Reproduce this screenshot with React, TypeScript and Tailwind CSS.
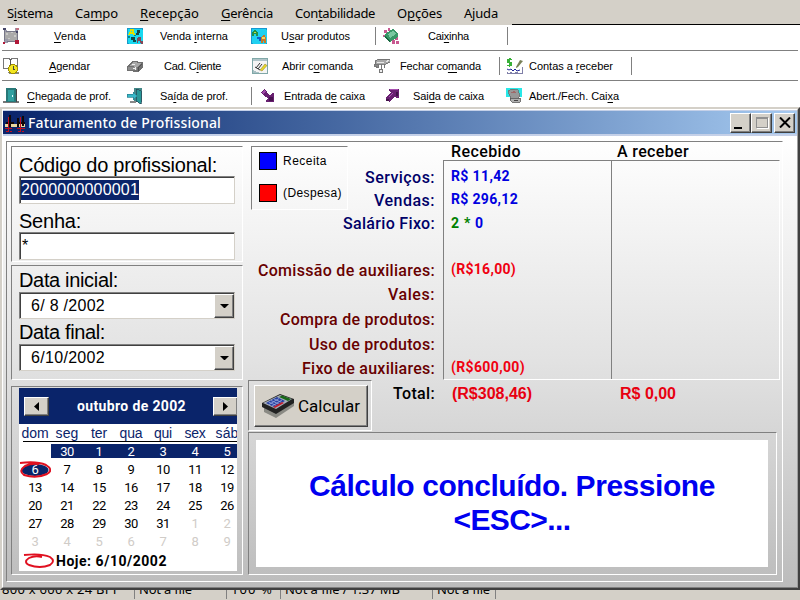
import React, { useLayoutEffect, useRef, useState } from "react";

const arial = "font-['Liberation_Sans',Arial,sans-serif]";
const roboto = "font-['Roboto','Liberation_Sans',sans-serif]";
const tahoma = "font-['Noto_Sans','Liberation_Sans',sans-serif]";
const etched = "border border-t-[#808080] border-l-[#808080] border-r-white border-b-white";

/* A label whose tracking is adjusted so that it fills a given width. */
function Fit({ w, t, className = "" }: { w: number; t: string; className?: string }) {
  const ref = useRef<HTMLSpanElement>(null);
  const [ls, setLs] = useState(0);
  useLayoutEffect(() => {
    const el = ref.current;
    if (!el) return;
    const n = (el.textContent || "").length;
    setLs((w - el.getBoundingClientRect().width) / Math.max(1, n));
  }, [w, t]);
  const i = t.indexOf("&");
  return (
    <span className={"block shrink-0 whitespace-pre " + className} style={{ width: w, letterSpacing: ls }}>
      <span ref={ref} className="inline-block">
        {i < 0 ? t : (
          <>
            {t.slice(0, i)}
            <span className="underline underline-offset-2 decoration-1">{t[i + 1]}</span>
            {t.slice(i + 2)}
          </>
        )}
      </span>
    </span>
  );
}

type IconName = "venda" | "interna" | "usar" | "caixinha" | "agendar" | "cliente" | "abrir" | "fechar" | "contas" | "chegada" | "saida" | "entradaCx" | "saidaCx" | "abert";

const icons: Record<IconName, React.ReactNode> = {
  venda: (
    <>
      <path d="M2 3h12v10H2z" fill="#aaa" />
      <path d="M3 5h2v2H3zM8 4h2v1H8zM11 7h2v2h-2zM5 10h2v1H5z" fill="#c8c8c8" />
      <path d="M1 2h3v2H1zM12 0h3v4h-3zM1 11h4v4H1z" fill="#99a" />
      <path d="M1 1h1v12H1zM14 3h1v9h-1zM3 3h10v1H3zM4 13h8v1H4z" fill="#778" />
      <path d="M0 0h3v2H0zM13 3h2v2h-2z" fill="#446" />
      <path d="M12 12h4v4h-4zM0 14h2v2H0z" fill="#b01838" />
      <path d="M13 0h3v2h-3z" fill="#c07080" />
    </>
  ),
  interna: (
    <>
      <rect width="16" height="16" rx="1.5" fill="#18d8f0" stroke="#1898c8" />
      <path d="M2 7l2-5h2l1 5M3 5h3" stroke="#e0e000" strokeWidth="1.6" fill="none" />
      <path d="M10 2h3v3h-3zM9 5h3v2H9zM4 9h4v3H4zM6 12h3v2H6z" fill="#104848" />
      <path d="M1 8h2v2H1zM7 7h2v1H7z" fill="#088" />
      <path d="M11 9h3v6h-1v-2h-2v2h-1v-4zM14 13h2v3h-2z" fill="#804858" />
    </>
  ),
  usar: (
    <>
      <rect width="16" height="16" rx="1.5" fill="#20d0f0" stroke="#1898d0" />
      <path d="M1 8V5l2-3h2l2 3v3H5V6H3v2z" fill="#209048" />
      <path d="M3 4h2v1H3z" fill="#c0e040" />
      <path d="M6 9h4v4H8v-2H6z" fill="#1060c8" />
      <path d="M10 15V9l2-2h2l1 3v5h-2v-2h-1v2z" fill="#c87828" />
      <path d="M11 9h3v2h-3z" fill="#f0d860" />
    </>
  ),
  caixinha: (
    <>
      <path d="M1 2h3v3H1zM5 0h2v3H5zM0 7h3v2H0zM12 9h3v3h-3zM9 12h3v4H9zM13 13h3v3h-3z" fill="#c85890" />
      <path d="M3 5l7-4 5 4v4l-8 5-6-5z" fill="#389868" />
      <path d="M5 6l5-3 3 3-6 4z" fill="#78c8a0" />
      <path d="M1 9l6 5v-2L2 8z" fill="#186840" />
    </>
  ),
  agendar: (
    <>
      <path d="M.5.5h5l2 1 2-1h5v10h-5l-2 1-2-1h-5z" fill="#fff" stroke="#777" />
      <path d="M7.500 1v10" stroke="#555" />
      <path d="M5 14h11v2H6z" fill="#888" />
      <circle cx="10" cy="11" r="4.500" fill="#f2e620" stroke="#a09000" />
      <path d="M10 8v3h2" stroke="#444" fill="none" />
    </>
  ),
  cliente: (
    <>
      <path d="M0 8l5-5 11 1v5l-5 5-11-1z" fill="#707070" />
      <path d="M2 8l4-4 8 1-3 4z" fill="#a8a8a8" />
      <path d="M1 9h9v3H1z" fill="#8c8c8c" />
      <path d="M5 6h3v1H5zM8 9h1v3H8zM6 10h2v1H6z" fill="#eee" />
      <path d="M11 9l4-4v1l-3 3v4h-1z" fill="#505050" />
    </>
  ),
  abrir: (
    <>
      <path d="M.5.5h15v15H.5z" fill="#f4f4f4" stroke="#80a8a8" />
      <path d="M1 1h14v2H1z" fill="#b0c4c8" />
      <path d="M1 12L8 15H1z" fill="#a8c0c4" />
      <g shapeRendering="auto">
        <path d="M4 10l4-5M6 11l4-5M3 9l5 3" stroke="#333" fill="none" />
        <path d="M8 12l5-6 2 1.500-5 5.500z" fill="#e8d828" stroke="#887820" strokeWidth=".5" />
      </g>
    </>
  ),
  fechar: (
    <>
      <path d="M1 3l4-2h11v3l-4 2H1z" fill="#a8a8a8" stroke="#666" strokeWidth=".8" />
      <path d="M3 4h7M12 4l3-2" stroke="#e8e8e8" />
      <path d="M0 6h4v3H2V8H0zM7 6v5M10 6v4" stroke="#777" fill="#888" />
      <circle cx="7" cy="13" r="2" fill="#eee" stroke="#777" />
    </>
  ),
  contas: (
    <>
      <path d="M2 0h2v1h1v1H3v2h2v4H3v1H2V8H0V7h2V5H0V1h2z" fill="#38b038" />
      <g shapeRendering="auto">
        <path d="M9 9l4-7 3 1-5 6-2 1z" fill="#788058" />
        <path d="M0 11l2 1 2-1 2 2 2-2 2 2 3-1" stroke="#222898" fill="none" />
      </g>
      <path d="M15 9v6H0v-1M3 14.500h2M8 14.500h3" stroke="#8080a8" fill="none" />
    </>
  ),
  chegada: (
    <>
      <path d="M3 0h10v14H3z" fill="#287878" />
      <path d="M5 2h6v11H5z" fill="#30a0a0" />
      <path d="M9 7h1v2H9z" fill="#dff" />
      <path d="M0 13h3v1h10v-1h3v2H0z" fill="#777" />
      <path d="M13 1h1v13h-1z" fill="#444" />
    </>
  ),
  saida: (
    <>
      <path d="M7 0h8v14H7z" fill="#488" />
      <path d="M9 1l5 2v13l-5-3z" fill="#289898" stroke="#245" strokeWidth=".7" />
      <path d="M0 6h6V4l4 4-4 4V9H0z" fill="#38b8c8" stroke="#288090" strokeWidth=".7" />
      <path d="M3 13h6v2H3z" fill="#888" />
    </>
  ),
  entradaCx: (
    <>
      <path d="M1 4l4-3 4 6 2 0 1-2h2v9H6l0-2 2-2-3-1z" fill="#682070" />
      <path d="M2 4l3-2 1 2-3 2z" fill="#a048a8" />
      <path d="M9 9h4v4H9z" fill="#481050" />
    </>
  ),
  saidaCx: (
    <>
      <path d="M5 1h10v9h-3l-1-2-6 6-4-4 6-5-2-2z" fill="#682070" />
      <path d="M6 1h8v1H6zM7 6l2-1-4 5-1-1z" fill="#a850b0" />
      <path d="M2 11h3v2H2zM12 4h2v4h-2z" fill="#401048" />
    </>
  ),
  abert: (
    <>
      <path d="M0 0h16v9H0z" fill="#28e8e8" />
      <path d="M2 3l4-2 6 1 2 6-3 3H5z" fill="#989898" stroke="#666" strokeWidth=".7" />
      <path d="M4 4l5-1 1 2H5z" fill="#a06868" />
      <path d="M4 10h10v4H6l-2-2z" fill="#b0b0b0" stroke="#555" strokeWidth=".8" />
      <path d="M8 12h4" stroke="#444" />
    </>
  ),
};

function Icon({ n }: { n: IconName }) {
  return <svg className="block size-4 shrink-0" viewBox="0 0 16 16" shapeRendering="crispEdges">{icons[n]}</svg>;
}

function Tool({ n, t, w, cls, gap }: { n: IconName; t: string; w: number; cls: string; gap: string }) {
  return (
    <div className={"flex shrink-0 items-center " + cls}>
      <Icon n={n} />
      <Fit t={t} w={w} className={gap} />
    </div>
  );
}
const Sep = ({ cls }: { cls: string }) => <div className={"h-[18px] w-px shrink-0 bg-[#808080] " + cls} />;

function Row({ k }: { k: { t: string; w: number; h: string } }) {
  return (
    <div className={"flex shrink-0 items-center justify-end " + k.h}>
      <Fit t={k.t} w={k.w} />
    </div>
  );
}

const costs = [
  { t: "Comissão de auxiliares:", w: 177, h: "h-[25px]" },
  { t: "Vales:", w: 47, h: "h-6" },
  { t: "Compra de produtos:", w: 155, h: "h-[25px]" },
  { t: "Uso de produtos:", w: 126, h: "h-[25px]" },
  { t: "Fixo de auxiliares:", w: 133, h: "h-6" },
];

const inset = "border border-t-[#808080] border-l-[#808080] border-r-[#d4d0c8] border-b-[#d4d0c8] bg-white";
const raised = "bg-[#d4d0c8] border border-t-white border-l-white border-r-[#404040] border-b-[#404040] shadow-[inset_-1px_-1px_0_#808080]";

function DateBox({ t, w }: { t: string; w: number }) {
  return (
    <div className={"flex h-[27px] w-[216px] shrink-0 shadow-[inset_1px_1px_0_#404040] " + inset}>
      <div className="flex flex-1 items-center pl-[11px] text-[16px]"><Fit t={t} w={w} /></div>
      <div className={"mt-px flex h-6 w-5 items-center justify-center " + raised}>
        <svg className="h-1 w-[9px]" viewBox="0 0 9 4"><path d="M0 0h9L4.500 4.500z" /></svg>
      </div>
    </div>
  );
}

const weeks = [
  [0, 30, 1, 2, 3, 4, 5],
  [6, 7, 8, 9, 10, 11, 12],
  [13, 14, 15, 16, 17, 18, 19],
  [20, 21, 22, 23, 24, 25, 26],
  [27, 28, 29, 30, 31, 1, 2],
  [3, 4, 5, 6, 7, 8, 9],
];
const dayNames: [string, number][] = [["dom", 27], ["seg", 23], ["ter", 16], ["qua", 23], ["qui", 18], ["sex", 21], ["sáb", 23]];

function Calendar() {
  return (
    <div className="flex h-[183px] w-[218px] flex-col overflow-hidden bg-white">
      <div className="flex h-9 shrink-0 items-center bg-[#0a246a] pl-[5px] text-white">
        <div className={"flex h-[19px] w-[25px] shrink-0 items-center justify-center " + raised}>
          <svg className="h-[9px] w-[5px]" viewBox="0 0 5 9"><path d="M5 0v9L0 4.500z" /></svg>
        </div>
        <Fit t="outubro de 2002" w={109} className={"ml-7 text-[14px] font-bold " + roboto} />
        <div className={"ml-[27px] flex h-[19px] w-[25px] shrink-0 items-center justify-center " + raised}>
          <svg className="h-[9px] w-[5px]" viewBox="0 0 5 9"><path d="M0 0v9l5-4.500z" /></svg>
        </div>
      </div>
      <div className="grid h-[17px] shrink-0 grid-cols-[repeat(7,32px)] items-end text-[14px] leading-4 text-[#0a246a]">
        {dayNames.map(([d, w]) => <div key={d} className="flex justify-center"><Fit t={d} w={w} /></div>)}
      </div>
      <div className="ml-1 h-px shrink-0 bg-black" />
      <div className={"mt-px flex shrink-0 flex-col text-[13px] tracking-[-0.5px] " + roboto}>
        {weeks.map((wk, r) => (
          <div key={r} className="grid h-[18px] grid-cols-[repeat(7,32px)]">
            {wk.map((d, c) => {
              const out = r === 5 || (r === 4 && c > 4);
              const sel = r === 0 && c > 0;
              const today = r === 1 && c === 0;
              return (
                <div key={c} className={"relative flex h-[18px] items-center justify-center " + (out ? "text-[#d0ccc8]" : sel || today ? "text-white" : "text-black")}>
                  {sel && <div className="absolute inset-x-0 top-[1px] h-[14px] bg-[#0a246a]" />}
                  {today && (
                    <svg className="absolute left-0 top-0 h-[18px] w-8" viewBox="0 0 32 18" fill="none">
                      <ellipse cx="16" cy="9" rx="13.500" ry="6" fill="#0a246a" />
                      <path d="M1 2Q18 0 27 4Q35 9 28 13Q17 18 5 14Q-1 10 6 5Q12 2 20 3" stroke="#e01020" strokeWidth="2" />
                    </svg>
                  )}
                  <span className="relative">{d || ""}</span>
                </div>
              );
            })}
          </div>
        ))}
      </div>
      <div className="flex h-[19px] shrink-0 items-center pl-1">
        <svg className="h-4 w-8" viewBox="0 0 32 16" fill="none">
          <path d="M1 2Q18 0 27 4Q33 8 27 12Q17 16 6 12Q0 9 6 5Q12 2 19 4" stroke="#e01020" strokeWidth="1.900" />
        </svg>
        <Fit t="Hoje: 6/10/2002" w={111} className={"ml-px text-[14px] font-bold leading-[18px] " + roboto} />
      </div>
    </div>
  );
}

function Calculator() {
  return (
    <svg className="h-6 w-8 shrink-0" viewBox="0 0 32 24">
      <path d="M2 14l18-10 12 5v3L14 24 2 18z" fill="#8a8a84" />
      <path d="M0 9L18 0l14 5v4L14 20 0 13z" fill="#222" />
      <path d="M1 9L18 1l12 4-16 10z" fill="#a8aeb8" />
      <path d="M17 3l3-1.500 9 3.500-3 2z" fill="#186818" />
      <path d="M4 9l11-6 8 4-11 6z" fill="#2840a0" />
      <path d="M6.500 8l9 4M9 6.500l9 4M12 5l9 4M7 10.500l10-6M10 12l10-6" stroke="#98a8e0" strokeWidth=".8" fill="none" />
      <path d="M11 13l9-5 2 1-9 5z" fill="#c02030" />
    </svg>
  );
}

export default function App() {
  return (
    <div className={"flex h-[600px] w-[800px] flex-col overflow-hidden bg-white text-black " + arial}>
      <nav className={"flex h-[25px] shrink-0 flex-col bg-[#d4d0c8] text-[13px] " + tahoma}>
        <div className="flex h-6 items-center gap-[22px] pl-[7px] pt-px leading-5">
          <Fit t="S&istema" w={46} />
          <Fit t="Ca&mpo" w={43} />
          <Fit t="&Recepção" w={59} />
          <Fit t="&Gerência" w={52} />
          <Fit t="Con&tabilidade" w={80} />
          <Fit t="O&pções" w={45} />
          <Fit t="Ajuda" w={34} />
        </div>
        <div className="ml-[512px] h-px bg-black" />
      </nav>

      <div className="flex h-[82px] shrink-0 flex-col text-[11px] leading-4">
        <div className="mx-0.5 flex h-[26px] items-center border-b border-[#808080] pb-[3px]">
          <Tool n="venda" t="&Venda" w={32} cls="ml-px" gap="ml-[35px]" />
          <Tool n="interna" t="Venda &interna" w={68} cls="ml-[41px]" gap="ml-[17px]" />
          <Tool n="usar" t="U&sar produtos" w={69} cls="ml-[23px]" gap="ml-[14px]" />
          <Sep cls="ml-[25px]" />
          <Tool n="caixinha" t="Cai&xinha" w={41} cls="ml-[7px]" gap="ml-[29px]" />
          <Sep cls="ml-[38px]" />
        </div>
        <div className="mx-0.5 flex h-[30px] items-center border-b border-[#808080]">
          <Tool n="agendar" t="&Agendar" w={41} cls="ml-px" gap="ml-[30px]" />
          <Tool n="cliente" t="Cad. C&liente" w={57} cls="ml-[37px]" gap="ml-[21px]" />
          <Tool n="abrir" t="Abrir c&omanda" w={71} cls="ml-[31px]" gap="ml-[14px]" />
          <Tool n="fechar" t="Fechar co&manda" w={81} cls="ml-[21px]" gap="ml-[10px]" />
          <Sep cls="ml-[18px]" />
          <Tool n="contas" t="Contas a &receber" w={84} cls="ml-[7px]" gap="ml-[6px]" />
          <Sep cls="ml-[18px]" />
        </div>
        <div className="mx-0.5 flex h-[26px] items-center pt-[3px]">
          <Tool n="chegada" t="&Chegada de prof." w={84} cls="ml-px" gap="ml-[8px]" />
          <Tool n="saida" t="Sa&ída de prof." w={68} cls="ml-[16px]" gap="ml-[17px]" />
          <Sep cls="ml-[23px]" />
          <Tool n="entradaCx" t="Entrada d&e caixa" w={81} cls="ml-[8px]" gap="ml-[8px]" />
          <Tool n="saidaCx" t="Sai&da de caixa" w={71} cls="ml-[19px]" gap="ml-[13px]" />
          <Tool n="abert" t="Abert./Fech. Cai&xa" w={90} cls="ml-[22px]" gap="ml-[7px]" />
        </div>
      </div>

      <main className="flex h-[483px] w-[800px] shrink-0 flex-col border-2 border-t-[#d4d0c8] border-l-[#d4d0c8] border-r-[#404040] border-b-[#404040]">
        <div className="flex min-h-0 flex-1 flex-col border border-white border-r-[#a0a0a0] border-b-[#808080]">
          <header className="flex h-[26px] shrink-0 items-center border-b-2 border-t border-[#c4d0e8] bg-linear-to-r from-[#0a246a] to-[#a6caf0] pl-[2px] pr-[2px] text-white">
            <svg className="h-5 w-5" viewBox="0 0 20 20" shapeRendering="crispEdges">
              <path d="M0 11h20v3H0z" fill="#e8d8a0" />
              <path d="M5 2v12M13 5v9M18 3v10M1 10h8M13 10h7" stroke="#100808" strokeWidth="2" />
              <path d="M3.500 4v15M15.500 4v15M0 15.500h7M12 15.500h8" stroke="#c01020" />
              <path d="M1 18h2M5 18h2M13 18h2M17 18h2" stroke="#c01020" />
            </svg>
            <Fit t="Faturamento de Profissional" w={193} className={"ml-[3px] text-[14px] font-medium " + tahoma} />
            <div className="ml-auto flex">
              <div className={"flex h-5 w-[21px] items-end pb-[3px] pl-[3px] " + raised}><div className="h-0.5 w-2 bg-black" /></div>
              <div className={"flex h-5 w-[21px] items-center justify-center " + raised}><div className="h-[11px] w-3 border border-t-2 border-[#909090] bg-[#d4d0c8] shadow-[1px_1px_0_white]" /></div>
              <div className={"ml-0.5 flex h-5 w-[21px] items-center justify-center " + raised}>
                <svg className="h-[11px] w-3" viewBox="0 0 12 11"><path d="M1 .5l10 10M11 .5l-10 10" stroke="#000" strokeWidth="2" /></svg>
              </div>
            </div>
          </header>

          <div className="flex min-h-0 flex-1 bg-linear-to-b from-white via-[#e2e2e2] to-[#bcbcbc] pl-[3px] pt-[5px]">
            <div className={"flex h-[441px] w-[777px] shrink-0 " + etched}>
              {/* left column */}
              <section className="flex w-[241px] shrink-0 flex-col pl-1 pt-1 leading-6">
                <div className={"flex h-[116px] w-[232px] shrink-0 flex-col pl-[7px] pt-[6px] " + etched}>
                  <Fit t="Código do profissional:" w={198} className="text-[20px]" />
                  <div className={"-mt-px flex h-7 w-[216px] shrink-0 items-center pl-px shadow-[inset_1px_1px_0_#404040] " + inset}>
                    <div className="h-5 bg-[#0a246a] text-[16px] leading-5 text-white"><Fit t="2000000000001" w={118} /></div>
                  </div>
                  <Fit t="Senha:" w={62} className="mt-[5px] text-[20px]" />
                  <div className={"-mt-px flex h-7 w-[216px] shrink-0 items-center pl-0.5 text-[16px] shadow-[inset_1px_1px_0_#404040] " + inset}>*</div>
                </div>
                <div className={"mt-[3px] flex h-[115px] w-[232px] shrink-0 flex-col pl-[7px] pt-[2px] " + etched}>
                  <Fit t="Data inicial:" w={99} className="text-[20px]" />
                  <DateBox t="6/ 8 /2002" w={74} />
                  <Fit t="Data final:" w={86} className="mt-px text-[20px]" />
                  <DateBox t="6/10/2002" w={74} />
                </div>
                <div className={"mt-[6px] flex h-[189px] w-[232px] shrink-0 flex-col pl-[7px] pt-px " + etched}>
                  <Calendar />
                </div>
              </section>

              {/* right column */}
              <section className="flex w-[533px] shrink-0 flex-col">
                <div className="flex h-[238px] shrink-0">
                  <div className={"flex w-[187px] shrink-0 flex-col text-[16px] font-medium leading-5 " + roboto}>
                    <div className="flex h-[70px] shrink-0">
                      <div className={"ml-[3px] mt-1 flex h-16 w-[97px] shrink-0 flex-col gap-[14px] pl-[7px] pt-[5px] font-normal " + arial + " " + etched}>
                        <div className="flex h-[18px] items-center text-[12px]">
                          <div className="mr-[6px] size-[18px] border border-black bg-[#00f]" />
                          <Fit t="Receita" w={44} />
                        </div>
                        <div className="flex h-[18px] items-center text-[12px]">
                          <div className="mr-[6px] size-[18px] border border-black bg-[#f00]" />
                          <Fit t="(Despesa)" w={59} />
                        </div>
                      </div>
                      <div className="ml-auto flex flex-col pt-6 text-[#000068]">
                        <Row k={{ t: "Serviços:", w: 70, h: "h-[23px]" }} />
                        <Row k={{ t: "Vendas:", w: 61, h: "h-[23px]" }} />
                      </div>
                    </div>
                    <div className="text-[#000068]"><Row k={{ t: "Salário Fixo:", w: 92, h: "h-6" }} /></div>
                    <div className="mt-[22px] text-[#680000]">
                      {costs.map((c) => <Row key={c.t} k={c} />)}
                    </div>
                  </div>
                  <div className={"ml-[8px] flex w-[337px] shrink-0 flex-col " + roboto}>
                    <div className="flex h-[18px] items-center pl-[8px] pt-px text-[16px] font-medium leading-[18px]">
                      <Fit t="Recebido" w={70} />
                      <Fit t="A receber" w={72} className="ml-[96px]" />
                    </div>
                    <div className={"flex h-[220px] shrink-0 " + etched}>
                      <div className="flex w-[168px] shrink-0 flex-col border-r border-[#808080] pl-[7px] pt-1 text-[14px] font-bold text-[#0000e0]">
                        <div className="flex h-[23px] items-center"><Fit t="R$ 11,42" w={59} /></div>
                        <div className="flex h-6 items-center"><Fit t="R$ 296,12" w={67} /></div>
                        <div className="flex h-6 items-center"><Fit t="2 *" w={20} className="text-[#008000]" /><span className="ml-1">0</span></div>
                        <div className="mt-[22px] flex h-[25px] items-center text-[#f00010]"><Fit t="(R$16,00)" w={65} /></div>
                        <div className="mt-[73px] flex h-6 items-center text-[#f00010]"><Fit t="(R$600,00)" w={74} /></div>
                      </div>
                    </div>
                  </div>
                </div>
                <div className="flex h-[51px] shrink-0">
                  <div className={"flex w-[124px] shrink-0 items-center pl-[5px] " + etched}>
                    <div className={"flex h-[42px] w-[114px] items-center pl-[7px] " + raised}>
                      <Calculator />
                      <Fit t="Calcular" w={62} className={"ml-[4px] text-[17px] leading-5 " + roboto} />
                    </div>
                  </div>
                  <div className="ml-[21px] flex h-[28px] items-center text-[16px] font-bold text-[#e80010]">
                    <Fit t="Total:" w={42} className={"font-medium text-black " + roboto} />
                    <Fit t="(R$308,46)" w={80} className="ml-[17px]" />
                    <Fit t="R$ 0,00" w={56} className="ml-[88px]" />
                  </div>
                </div>
                <div className={"mt-px h-[143px] w-[529px] shrink-0 pl-[7px] pt-[7px] " + etched}>
                  <div className="flex h-[127px] w-[512px] flex-col items-center bg-white pt-[29px] text-[30px] font-bold leading-[34px] text-[#0000f0]">
                    <Fit t="Cálculo concluído. Pressione" w={406} />
                    <Fit t="<ESC>..." w={117} />
                  </div>
                </div>
              </section>
            </div>
          </div>
        </div>
      </main>

      <footer className={"flex h-[10px] shrink-0 items-end overflow-hidden bg-[#d4d0c8] text-[13px] " + tahoma}>
        <div className="-mt-3 flex h-[22px] items-center leading-5">
          <div className="flex w-[134px] pl-0.5"><Fit t="800 x 600 x 24 BPP" w={119} /></div>
          <div className="flex w-[92px] border-l border-[#808080] pl-1"><Fit t="Not a file" w={53} /></div>
          <div className="flex w-[54px] border-l border-[#808080] pl-1"><Fit t="100 %" w={42} /></div>
          <div className="flex w-[152px] border-l border-[#808080] pl-1"><Fit t="Not a file / 1.37 MB" w={115} /></div>
          <div className="flex w-[64px] border-l border-r border-[#808080] pl-1"><Fit t="Not a file" w={53} /></div>
        </div>
      </footer>
    </div>
  );
}
